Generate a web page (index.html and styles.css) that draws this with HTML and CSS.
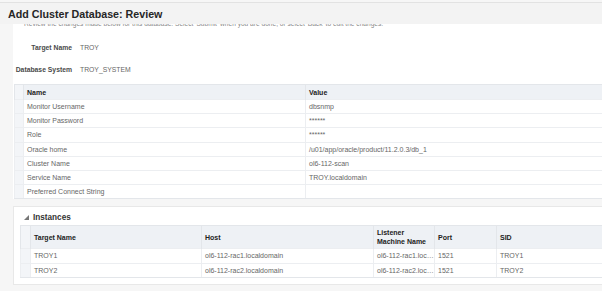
FILE: index.html
```html
<!DOCTYPE html>
<html>
<head>
<meta charset="utf-8">
<link rel="stylesheet" href="styles.css">
</head>
<body>
<div class="page">
  <div class="header"><h1 class="title">Add Cluster Database: Review</h1></div>
  <div class="main">
    <div class="intro"><div class="intro-text">Review the changes made below for this database. Select 'Submit' when you are done, or select 'Back' to edit the changes.</div></div>
    <div class="summary">
      <div class="field"><span class="label">Target Name</span><span class="value">TROY</span></div>
      <div class="field"><span class="label">Database System</span><span class="value">TROY_SYSTEM</span></div>
    </div>
    <table class="grid params">
      <colgroup><col class="c-stub"><col class="c-name"><col class="c-value"></colgroup>
      <thead><tr><th class="stub"></th><th>Name</th><th>Value</th></tr></thead>
      <tbody>
        <tr><td class="stub"></td><td>Monitor Username</td><td>dbsnmp</td></tr>
        <tr><td class="stub"></td><td>Monitor Password</td><td>******</td></tr>
        <tr><td class="stub"></td><td>Role</td><td>******</td></tr>
        <tr><td class="stub"></td><td>Oracle home</td><td>/u01/app/oracle/product/11.2.0.3/db_1</td></tr>
        <tr><td class="stub"></td><td>Cluster Name</td><td>ol6-112-scan</td></tr>
        <tr><td class="stub"></td><td>Service Name</td><td>TROY.localdomain</td></tr>
        <tr><td class="stub"></td><td>Preferred Connect String</td><td></td></tr>
      </tbody>
    </table>
  </div>
  <div class="gap"></div>
  <div class="panel">
    <div class="panel-head"><span class="tri"></span><span class="panel-title">Instances</span></div>
    <table class="grid inst">
      <colgroup><col class="i-stub"><col class="i-target"><col class="i-host"><col class="i-listener"><col class="i-port"><col class="i-sid"></colgroup>
      <thead><tr><th class="stub"></th><th>Target Name</th><th>Host</th><th>Listener<br>Machine Name</th><th>Port</th><th>SID</th></tr></thead>
      <tbody>
        <tr><td class="stub"></td><td>TROY1</td><td>ol6-112-rac1.localdomain</td><td title="ol6-112-rac1.localdomain">ol6-112-rac1.loc…</td><td>1521</td><td>TROY1</td></tr>
        <tr><td class="stub"></td><td>TROY2</td><td>ol6-112-rac2.localdomain</td><td title="ol6-112-rac2.localdomain">ol6-112-rac2.loc…</td><td>1521</td><td>TROY2</td></tr>
      </tbody>
    </table>
  </div>
</div>
</body>
</html>
```
FILE: styles.css
```css
html, body {
  margin: 0;
  padding: 0;
}
body {
  width: 602px;
  height: 291px;
  overflow: hidden;
  background: #f6f6f6;
  font-family: "Liberation Sans", Arial, sans-serif;
  color: #666;
}
.page {
  width: 640px;
}
.header {
  margin-top: 2px;
  height: 21px;
  border-top: 1px solid #e2e2e2;
  background: #f3f3f3;
  display: flex;
  align-items: center;
  padding-left: 8px;
}
.title {
  margin: 0;
  font-size: 10.7px;
  font-weight: bold;
  color: #262626;
}
.main {
  margin-left: 13px;
  background: #fff;
}
.intro {
  height: 5px;
  overflow: hidden;
  padding-left: 11px;
}
.intro-text {
  font-size: 6.6px;
  line-height: 8px;
  margin-top: -4px;
  color: #888;
  white-space: nowrap;
}
.summary {
  display: flex;
  flex-direction: column;
  gap: 14px;
  padding: 14px 0 11px 0;
}
.field {
  display: flex;
  align-items: center;
  height: 8px;
  font-size: 6.8px;
}
.label {
  width: 59px;
  text-align: right;
  font-weight: bold;
  color: #4a4a4a;
  margin-right: 8px;
}
.value {
  color: #666;
}
.grid {
  border-collapse: collapse;
  table-layout: fixed;
  font-size: 7px;
}
.grid th {
  background: #eef1f5;
  color: #222;
  font-weight: bold;
  text-align: left;
  padding: 0 3px;
  height: 14px;
  border-top: 1px solid #e3e6ea;
  border-left: 1px solid #e3e6ea;
}
.grid td {
  color: #666;
  height: 13.2px;
  padding: 0 3px;
  border-top: 1px solid #eceef1;
  border-left: 1px solid #eceef1;
  white-space: nowrap;
  overflow: hidden;
}
.grid tbody tr:last-child td {
  border-bottom: 1px solid #e3e6ea;
}
.grid .stub {
  background: #f3f5f8;
  padding: 0;
}
.params {
  margin-left: 1px;
  width: 626px;
}
.c-stub { width: 9px; }
.c-name { width: 282px; }
.c-value { width: 335px; }
.gap {
  height: 7px;
  margin-left: 13px;
  background: #f6f6f6;
}
.panel {
  margin-left: 13px;
  background: #fff;
  border: 1px solid #e8e8e8;
  padding: 3px 0 6px 6px;
}
.panel-head {
  display: flex;
  align-items: center;
  height: 14px;
  padding-left: 4px;
  margin-bottom: 1px;
}
.tri {
  width: 0;
  height: 0;
  border-left: 5px solid transparent;
  border-bottom: 5px solid #777;
  margin-right: 4px;
}
.panel-title {
  font-size: 8.2px;
  font-weight: bold;
  color: #333;
}
.inst {
  width: 620px;
}
.inst th {
  height: 22px;
  line-height: 9px;
}
.i-stub { width: 10px; }
.i-target { width: 171px; }
.i-host { width: 172px; }
.i-listener { width: 61px; }
.i-port { width: 62px; }
.i-sid { width: 144px; }
```
